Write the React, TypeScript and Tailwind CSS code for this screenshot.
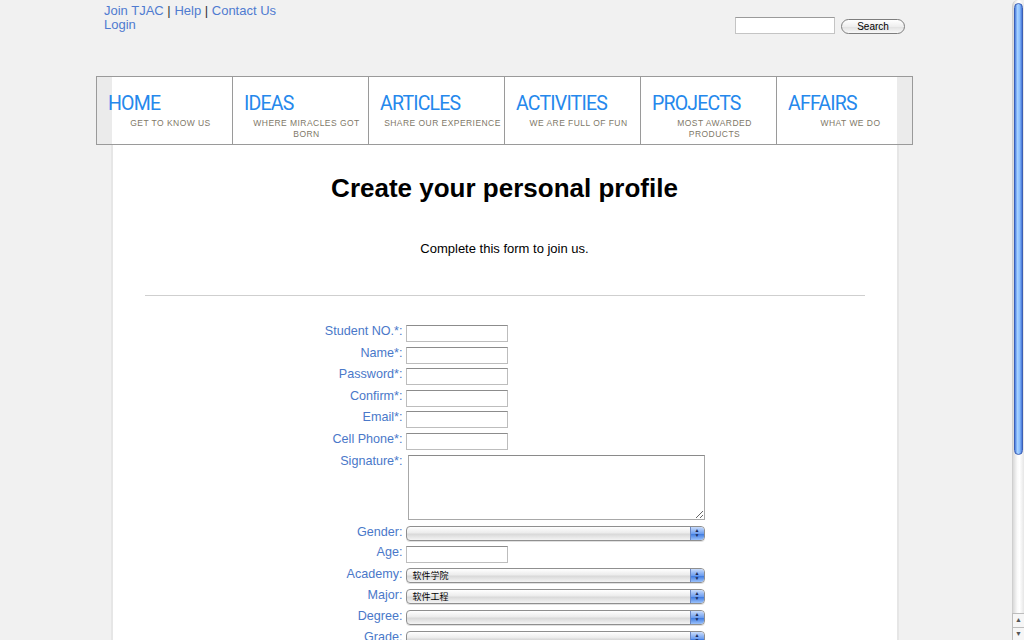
import React from 'react';

const NAV_ITEMS = [
  { title: 'HOME', sub: 'GET TO KNOW US' },
  { title: 'IDEAS', sub: 'WHERE MIRACLES GOT BORN' },
  { title: 'ARTICLES', sub: 'SHARE OUR EXPERIENCE' },
  { title: 'ACTIVITIES', sub: 'WE ARE FULL OF FUN' },
  { title: 'PROJECTS', sub: 'MOST AWARDED PRODUCTS' },
  { title: 'AFFAIRS', sub: 'WHAT WE DO' },
];

const TEXT_FIELDS = ['Student NO.*:', 'Name*:', 'Password*:', 'Confirm*:', 'Email*:', 'Cell Phone*:'];

function TextInput() {
  return (
    <input
      type="text"
      className="block h-[17px] w-[102px] border border-[#bdbdbd] border-t-[#8c8c8c] bg-white outline-none"
    />
  );
}

function AquaSelect({ value = '' }: { value?: string }) {
  return (
    <div className="flex h-[15px] w-[299px] items-stretch overflow-hidden rounded-[4px] border border-[#8f8f8f] bg-[linear-gradient(#ffffff,#ececec_45%,#d9d9d9_55%,#f4f4f4)] shadow-[0_1px_0_rgba(0,0,0,0.12)]">
      <span className="flex-1 pl-[6px] text-[9px] leading-[13px] text-black font-['Noto_Sans_CJK_SC',sans-serif]">
        {value}
      </span>
      <span className="flex w-[14px] flex-col items-center justify-center rounded-r-[3px] border-l border-[#6a87c4] bg-[linear-gradient(#c9dcfb,#6f9ff0_50%,#3f7be0_55%,#9cc2fb)] text-[5px] leading-[5px] text-[#1b2a55]">
        <span>▲</span>
        <span>▼</span>
      </span>
    </div>
  );
}

function FormRow({ label, height, children }: { label: string; height: string; children: React.ReactNode }) {
  return (
    <div className={`flex shrink-0 items-start ${height}`}>
      <div className="-mt-[1px] w-[290px] text-right text-[12.6px] leading-[15px] text-[#4a78c9]">{label}</div>
      <div className="ml-[3px]">{children}</div>
    </div>
  );
}

function Scrollbar() {
  return (
    <div className="flex h-full w-[15px] shrink-0 flex-col bg-[#f1f1f1] pl-[3px]">
      <div className="flex flex-1 flex-col rounded-t-full border-l border-[#cfcfcf] bg-[linear-gradient(to_right,#d9d9d9,#fafafa_40%,#ffffff_60%,#e6e6e6)]">
        <div className="mx-[1px] mt-[3px] h-[452px] rounded-full border border-[#3b5fb5] bg-[linear-gradient(to_right,#4a7ee0,#a8d2ff_35%,#8cc0ff_65%,#4676d8)]" />
        <div className="flex-1 rounded-b-full" />
      </div>
      <div className="flex h-[14px] items-center justify-center border-l border-t border-[#bdbdbd] bg-[#f6f6f6] text-[7px] text-[#555]">▲</div>
      <div className="flex h-[13px] items-center justify-center border-l border-t border-[#bdbdbd] bg-[#f6f6f6] text-[7px] text-[#555]">▼</div>
    </div>
  );
}

export default function App() {
  return (
    <div className="flex h-[640px] w-[1024px] overflow-hidden bg-[#f1f1f1] font-['Liberation_Sans',Arial,sans-serif]">
      <div className="flex flex-1 flex-col items-center">
        {/* top bar */}
        <div className="flex h-[76px] w-[817px] shrink-0 justify-between px-2">
          <div className="pt-[4px] text-[13px] leading-[14px] text-[#4f7bd0]">
            <div>
              <a>Join TJAC</a> <span className="text-[#333]">|</span> <a>Help</a>{' '}
              <span className="text-[#333]">|</span> <a>Contact Us</a>
            </div>
            <div>
              <a>Login</a>
            </div>
          </div>
          <div className="flex items-start gap-[6px] pt-[17px]">
            <input type="text" className="h-[17px] w-[100px] border border-[#c4c4c4] border-t-[#9a9a9a] bg-white outline-none" />
            <button className="mt-[2px] h-[15px] w-[64px] rounded-full border border-[#7d7d7d] bg-[linear-gradient(#ffffff,#eeeeee_50%,#e2e2e2_55%,#f8f8f8)] text-[10px] leading-[12px] text-black">
              Search
            </button>
          </div>
        </div>

        {/* navigation */}
        <div className="flex h-[69px] w-[817px] shrink-0 border-y border-[#9a9a9a] bg-[linear-gradient(to_right,#ebebeb_16px,#ffffff_16px,#ffffff_801px,#ebebeb_801px)]">
          {NAV_ITEMS.map((item, i) => (
            <div
              key={item.title}
              className={`w-[136px] border-l border-[#9a9a9a] ${i === NAV_ITEMS.length - 1 ? 'w-[137px] border-r' : ''}`}
            >
              <div className="pl-[11px] pt-[16px] font-['Roboto',sans-serif] text-[19.5px] leading-[22px] tracking-[-0.8px] text-[#2588ec]">
                {item.title}
              </div>
              <div className="mt-[3px] pl-[12px] text-center text-[8.5px] leading-[11px] tracking-[0.45px] text-[#807868]">
                {item.sub}
              </div>
            </div>
          ))}
        </div>

        {/* content column */}
        <div className="w-[788px] flex-1 border-x-2 border-[#e6e6e6] bg-white">
          <h1 className="pt-[28px] text-center text-[26px] font-bold leading-[30px] text-black">Create your personal profile</h1>
          <p className="mt-[38px] text-center text-[13px] leading-[16px] text-black">Complete this form to join us.</p>
          <div className="mx-[32px] mt-[38px] border-t border-[#cfcfcf]" />

          <div className="mt-[29px] flex flex-col">
            {TEXT_FIELDS.map((label) => (
              <FormRow key={label} label={label} height="h-[21.6px]">
                <TextInput />
              </FormRow>
            ))}
            <FormRow label="Signature*:" height="h-[71px]">
              <textarea className="ml-[2px] block h-[65px] w-[297px] border border-[#a8a8a8] border-t-[#8a8a8a] bg-white outline-none" />
            </FormRow>
            <FormRow label="Gender:" height="h-[20.7px]">
              <AquaSelect />
            </FormRow>
            <FormRow label="Age:" height="h-[22px]">
              <TextInput />
            </FormRow>
            <FormRow label="Academy:" height="h-[20.7px]">
              <AquaSelect value="软件学院" />
            </FormRow>
            <FormRow label="Major:" height="h-[20.7px]">
              <AquaSelect value="软件工程" />
            </FormRow>
            <FormRow label="Degree:" height="h-[21px]">
              <AquaSelect />
            </FormRow>
            <FormRow label="Grade:" height="h-[21px]">
              <AquaSelect />
            </FormRow>
          </div>
        </div>
      </div>
      <Scrollbar />
    </div>
  );
}
